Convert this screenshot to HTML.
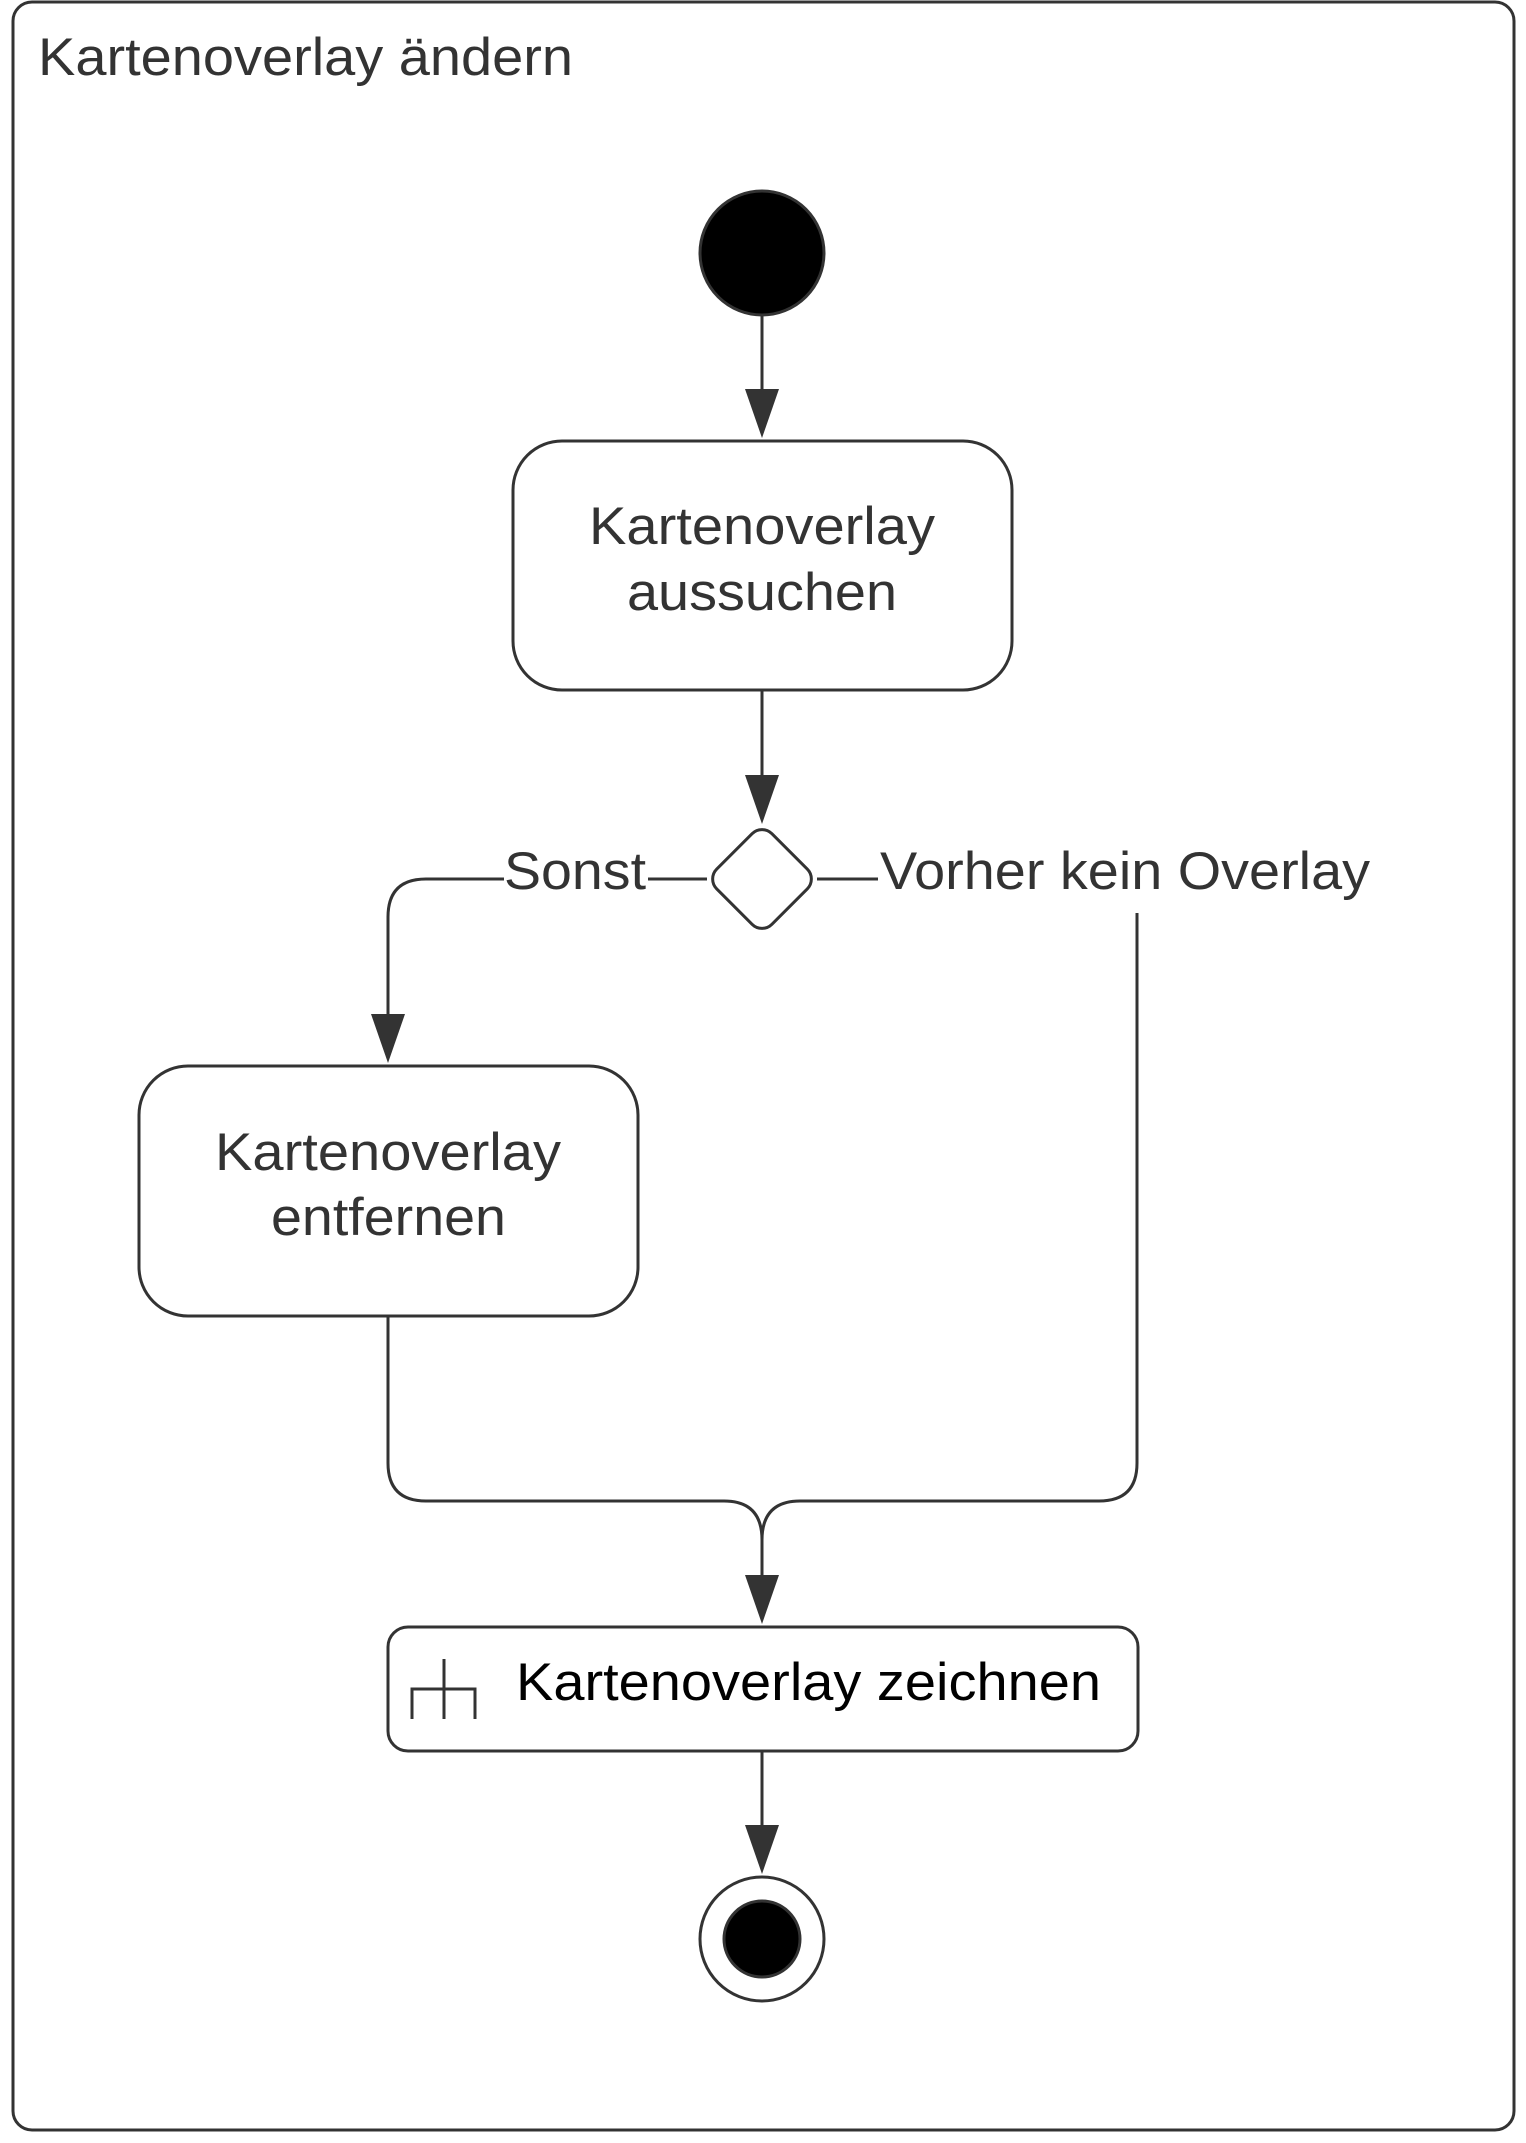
<!DOCTYPE html>
<html><head><meta charset="utf-8"><style>
html,body{margin:0;padding:0;background:#fff;width:1526px;height:2143px;overflow:hidden}
svg{display:block}
text{font-family:"Liberation Sans",sans-serif;fill:#333}
</style></head><body>
<svg width="1526" height="2143" viewBox="0 0 1526 2143" xmlns="http://www.w3.org/2000/svg">
<g fill="none" stroke="#333" stroke-width="3">
<rect x="13" y="2" width="1501" height="2128" rx="19"/>
<line x1="762" y1="316" x2="762" y2="392"/>
<rect x="513" y="441" width="499" height="249" rx="49"/>
<line x1="762" y1="690" x2="762" y2="778"/>
<rect x="723" y="840" width="78" height="78" rx="14" transform="rotate(45 762 879)"/>
<path d="M707 879 H648"/>
<path d="M504 879 H426 Q388 879 388 917 V1018"/>
<path d="M817 879 H878"/>
<path d="M1137 913 V1463 Q1137 1501 1099 1501 H800 Q762 1501 762 1540"/>
<path d="M388 1316 V1463 Q388 1501 426 1501 H724 Q762 1501 762 1540 V1578"/>
<rect x="139" y="1066" width="499" height="250" rx="49"/>
<rect x="388" y="1627" width="750" height="124" rx="20"/>
<path d="M412 1719 V1689 H475 V1719 M444 1659 V1719"/>
<line x1="762" y1="1751" x2="762" y2="1828"/>
<circle cx="762" cy="1939" r="62"/>
</g>
<g fill="#333">
<polygon points="745,389 779,389 762,438"/>
<polygon points="745,775 779,775 762,824"/>
<polygon points="371,1014 405,1014 388,1063"/>
<polygon points="745,1575 779,1575 762,1624"/>
<polygon points="745,1825 779,1825 762,1874"/>
</g>
<circle cx="762" cy="253" r="62" fill="#000" stroke="#333" stroke-width="3"/>
<circle cx="762" cy="1939" r="38" fill="#000" stroke="#333" stroke-width="3"/>
<text x="38" y="75" font-size="53" textLength="535" lengthAdjust="spacingAndGlyphs">Kartenoverlay ändern</text>
<text x="589" y="544" font-size="53" textLength="346" lengthAdjust="spacingAndGlyphs">Kartenoverlay</text>
<text x="627" y="610" font-size="53" textLength="270" lengthAdjust="spacingAndGlyphs">aussuchen</text>
<text x="215" y="1170" font-size="53" textLength="346" lengthAdjust="spacingAndGlyphs">Kartenoverlay</text>
<text x="271" y="1235" font-size="53" textLength="235" lengthAdjust="spacingAndGlyphs">entfernen</text>
<text x="504" y="889" font-size="53" textLength="142" lengthAdjust="spacingAndGlyphs">Sonst</text>
<text x="880" y="889" font-size="53" textLength="490" lengthAdjust="spacingAndGlyphs">Vorher kein Overlay</text>
<text x="516" y="1700" font-size="53" style="fill:#000" textLength="585" lengthAdjust="spacingAndGlyphs">Kartenoverlay zeichnen</text>
</svg>
</body></html>
